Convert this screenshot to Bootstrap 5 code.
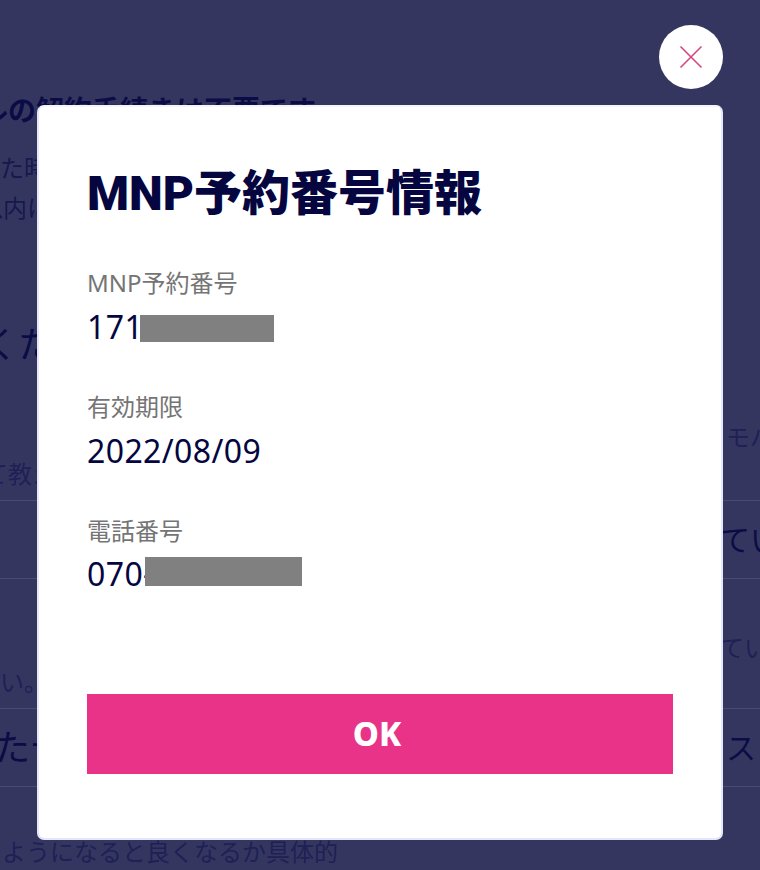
<!DOCTYPE html>
<html lang="ja">
<head>
<meta charset="utf-8">
<title>MNP予約番号情報</title>
<link href="https://cdn.jsdelivr.net/npm/bootstrap@5.3.0/dist/css/bootstrap.min.css" rel="stylesheet">
<style>
html,body{height:870px;overflow:hidden}
body{background:#35365f;font-family:"Noto Sans","Noto Sans CJK JP",sans-serif;color:#05063f}
.back-page{height:870px;overflow:hidden;color:#0b0c45}
.back-line{white-space:nowrap;width:800px}
.bl-a{padding-top:92px;height:148px;font-size:28px;font-weight:700;line-height:36px;margin-left:-20px}
.bl-b{font-size:24px;line-height:40px;height:40px;color:#17184e}
.bl-b1{margin-left:-24px}
.bl-b2{margin-left:-21px}
.bl-c{margin-top:93px;font-size:36px;line-height:48px;height:48px;margin-left:-18px}
.bl-d{margin-top:51px;height:34px;font-size:24px;line-height:34px;color:#1f2055;padding-left:726px}
.bl-e{height:47px;font-size:24px;line-height:40px;border-bottom:1px solid #4a4b70;color:#1f2055;padding-left:0;text-indent:-16px}
.bl-f{height:78px;line-height:77px;font-size:30px;border-bottom:1px solid #4a4b70;padding-left:720px}
.row-two{display:grid;grid-template-columns:720px auto}
.bl-g{height:130px;font-size:24px;line-height:34px;border-bottom:1px solid #4a4b70;color:#1f2055}
.bl-g-left{align-self:end;margin-bottom:9px;margin-left:-24px}
.bl-g-right{margin-top:52px}
.bl-h{height:78px;line-height:77px;font-size:30px;border-bottom:1px solid #4a4b70}
.bl-h-left{margin-left:-6px;font-size:36px}
.bl-h-right{margin-left:6px}
.bl-i{padding-top:47px;font-size:24px;line-height:36px;margin-left:-22px;color:#1f2055}
.sheet{position:fixed;left:37px;top:105px;width:686px;height:735px;background:#fff;border:2px solid #e4e6fa;border-top-color:#f4f4fc;border-radius:7px;padding:47px 48px 0;z-index:2}
.sheet-title{font-family:Roboto,"Noto Sans CJK JP",sans-serif;font-size:48px;font-weight:900;line-height:80px;margin:0 0 33px;height:80px;color:#05063f}
.field-label{font-size:24px;color:#757575;line-height:32px;margin:0 0 7px;height:32px}
.field-value{font-size:32px;letter-spacing:.4px;line-height:42px;height:42px;margin:0;color:#05063f;display:flex;align-items:center}
.field-gap{margin-top:43px}
.label-tight{margin-bottom:6px}
.mask-a{width:134px;height:27px;background:#808080;margin-left:-3px;margin-top:2px}
.mask-b{width:157px;height:29px;background:#808080;margin-left:-9px;margin-bottom:6px}
.ok-btn{display:flex;align-items:center;justify-content:center;width:586px;height:80px;background:#e83388;color:#fff;font-size:33px;font-weight:800;border:0;border-radius:0;position:absolute;left:48px;top:587px;padding:0 6px 0 0;font-family:"Noto Sans","Noto Sans CJK JP",sans-serif}
.close-btn{position:fixed;left:659px;top:25px;width:64px;height:64px;border-radius:50%;background:#fff;border:0;padding:0;display:flex;align-items:center;justify-content:center;z-index:3}
</style>
</head>
<body>
<div class="back-page" aria-hidden="true">
  <div class="back-line bl-a">ルの解約手続きは不要です</div>
  <div class="back-line bl-b bl-b1">れた時</div>
  <div class="back-line bl-b bl-b2">以内に</div>
  <div class="back-line bl-c">くた</div>
  <div class="back-line bl-d">モバ</div>
  <div class="back-line bl-e">て教え</div>
  <div class="back-line bl-f">てい</div>
  <div class="back-line bl-g row-two"><span class="bl-g-left">さい。</span><span class="bl-g-right">てい</span></div>
  <div class="back-line bl-h row-two"><span class="bl-h-left">たデ</span><span class="bl-h-right">ス</span></div>
  <div class="back-line bl-i">のようになると良くなるか具体的</div>
</div>
<button class="close-btn" type="button" aria-label="閉じる">
  <svg width="24" height="24" viewBox="0 0 24 24" fill="none" stroke="#d4467f" stroke-width="1.6"><path d="M1.5 1.5 22.5 22.5M22.5 1.5 1.5 22.5"/></svg>
</button>
<div class="sheet" role="dialog">
  <h1 class="sheet-title">MNP予約番号情報</h1>
  <div>
    <p class="field-label">MNP予約番号</p>
    <p class="field-value">171<span class="mask-a"></span></p>
  </div>
  <div class="field-gap">
    <p class="field-label">有効期限</p>
    <p class="field-value">2022/08/09</p>
  </div>
  <div class="field-gap">
    <p class="field-label label-tight">電話番号</p>
    <p class="field-value">070-<span class="mask-b"></span></p>
  </div>
  <button class="btn ok-btn" type="button">OK</button>
</div>
<script src="https://cdn.jsdelivr.net/npm/bootstrap@5.3.0/dist/js/bootstrap.bundle.min.js"></script>
</body>
</html>
